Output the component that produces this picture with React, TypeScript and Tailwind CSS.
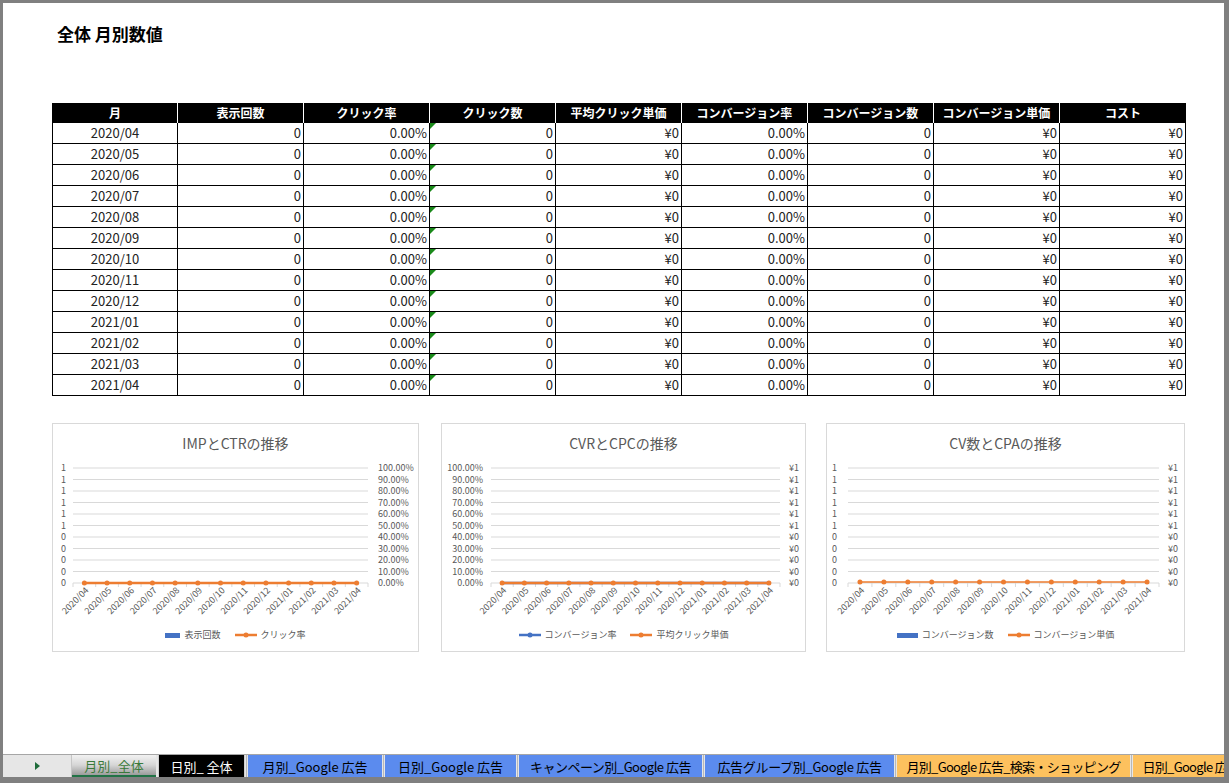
import React from 'react';

const months = [
  '2020/04', '2020/05', '2020/06', '2020/07', '2020/08', '2020/09', '2020/10',
  '2020/11', '2020/12', '2021/01', '2021/02', '2021/03', '2021/04',
];

const columns = [
  { label: '月', w: 'w-[125px]' },
  { label: '表示回数', w: 'w-[126px]' },
  { label: 'クリック率', w: 'w-[126px]' },
  { label: 'クリック数', w: 'w-[126px]' },
  { label: '平均クリック単価', w: 'w-[126px]' },
  { label: 'コンバージョン率', w: 'w-[126px]' },
  { label: 'コンバージョン数', w: 'w-[126px]' },
  { label: 'コンバージョン単価', w: 'w-[126px]' },
  { label: 'コスト', w: 'w-[126px]' },
];

const rowValues = ['0', '0.00%', '0', '¥0', '0.00%', '0', '¥0', '¥0'];

const BLUE = '#4472c4';
const ORANGE = '#ed7d31';

function DataTable() {
  return (
    <div className="mt-[57px] w-[1134px] border-l border-black font-['Noto_Sans_CJK_JP',sans-serif]">
      <div className="flex h-[20px] bg-black">
        {columns.map((c, i) => (
          <div
            key={c.label}
            className={`${c.w} flex items-center justify-center text-[12px] font-bold text-white ${
              i < columns.length - 1 ? 'border-r border-white' : ''
            }`}
          >
            {c.label}
          </div>
        ))}
      </div>
      {months.map((m) => (
        <div key={m} className="flex h-[21px]">
          <div className={`${columns[0].w} flex items-center justify-center border-r border-b border-black text-[13px] text-[#222]`}>
            {m}
          </div>
          {rowValues.map((v, i) => (
            <div
              key={i}
              className={`${columns[i + 1].w} relative flex items-center justify-end pr-[2px] border-r border-b border-black text-[13px] text-[#222]`}
            >
              {i === 2 && (
                <div className="absolute top-0 left-0 w-0 h-0 border-t-[6px] border-r-[6px] border-t-[#1a8a1a] border-r-transparent" />
              )}
              {v}
            </div>
          ))}
        </div>
      ))}
    </div>
  );
}

type LegendItem = { label: string; color: string; kind: 'bar' | 'line'; barW?: number };

type ChartProps = {
  title: string;
  width: string;
  svgW: number;
  plotLeft: number;
  plotRight: number;
  leftEnd: number;
  rightStart: number;
  left: string[];
  right: string[];
  lineW: number;
  lineY: number;
  blueLine?: boolean;
  legend: LegendItem[];
};

function Chart(p: ChartProps) {
  const gridYs = Array.from({ length: 11 }, (_, i) => 12 + i * 11.5);
  const cw = (p.plotRight - p.plotLeft) / 13;
  const centers = months.map((_, i) => p.plotLeft + (i + 0.5) * cw);
  const axisY = gridYs[10];

  return (
    <div className={`${p.width} h-[229px] border border-[#d9d9d9] bg-white flex flex-col font-['Noto_Sans_CJK_JP',sans-serif]`}>
      <div className="h-[32px] pt-[9px] text-center text-[14px] leading-[20px] text-[#595959]">{p.title}</div>
      <svg width={p.svgW} height={170} className="block">
        {gridYs.map((y) => (
          <line key={y} x1={p.plotLeft} x2={p.plotRight} y1={y} y2={y} stroke="#d9d9d9" strokeWidth={1} />
        ))}
        {Array.from({ length: 14 }, (_, i) => p.plotLeft + i * cw).map((x) => (
          <line key={x} x1={x} x2={x} y1={axisY} y2={axisY + 4} stroke="#d9d9d9" strokeWidth={1} />
        ))}
        {p.left.map((t, i) => (
          <text key={'l' + i} x={p.leftEnd} y={gridYs[i] + 3} textAnchor="end" fontSize={9} fill="#595959">
            {t}
          </text>
        ))}
        {p.right.map((t, i) => (
          <text key={'r' + i} x={p.rightStart} y={gridYs[i] + 3} fontSize={9} fill="#595959">
            {t}
          </text>
        ))}
        {centers.map((cx, i) => (
          <text
            key={'x' + i}
            x={cx + 5}
            y={axisY + 8}
            textAnchor="end"
            fontSize={9}
            fill="#595959"
            transform={`rotate(-45 ${cx + 5} ${axisY + 8})`}
          >
            {months[i]}
          </text>
        ))}
        {p.blueLine && (
          <polyline
            points={centers.map((x) => `${x},${p.lineY}`).join(' ')}
            fill="none"
            stroke={BLUE}
            strokeWidth={p.lineW}
          />
        )}
        <polyline
          points={centers.map((x) => `${x},${p.lineY}`).join(' ')}
          fill="none"
          stroke={ORANGE}
          strokeWidth={p.lineW}
        />
        {centers.map((x) => (
          <circle key={'d' + x} cx={x} cy={p.lineY} r={2.5} fill={ORANGE} />
        ))}
      </svg>
      <div className="h-[18px] flex items-center justify-center gap-[14px] text-[9px] text-[#595959]">
        {p.legend.map((l) => (
          <div key={l.label} className="flex items-center gap-[4px]">
            {l.kind === 'bar' ? (
              <span className="block h-[5px]" style={{ width: l.barW ?? 15, background: l.color }} />
            ) : (
              <svg width={22} height={6} className="block">
                <line x1={0} x2={22} y1={3} y2={3} stroke={l.color} strokeWidth={2.5} />
                <circle cx={11} cy={3} r={2.5} fill={l.color} />
              </svg>
            )}
            <span>{l.label}</span>
          </div>
        ))}
      </div>
    </div>
  );
}

const ones = ['1', '1', '1', '1', '1', '1', '0', '0', '0', '0', '0'];
const pct = ['100.00%', '90.00%', '80.00%', '70.00%', '60.00%', '50.00%', '40.00%', '30.00%', '20.00%', '10.00%', '0.00%'];
const yen = ['¥1', '¥1', '¥1', '¥1', '¥1', '¥1', '¥0', '¥0', '¥0', '¥0', '¥0'];

function Charts() {
  return (
    <div className="mt-[27px] flex">
      <Chart
        title="IMPとCTRの推移"
        width="w-[367px]"
        svgW={365}
        plotLeft={20}
        plotRight={315}
        leftEnd={13}
        rightStart={325}
        left={ones}
        right={pct}
        lineW={2.5}
        lineY={127}
        legend={[
          { label: '表示回数', color: BLUE, kind: 'bar', barW: 15 },
          { label: 'クリック率', color: ORANGE, kind: 'line' },
        ]}
      />
      <div className="w-[22px]" />
      <Chart
        title="CVRとCPCの推移"
        width="w-[365px]"
        svgW={363}
        plotLeft={49}
        plotRight={338}
        leftEnd={41}
        rightStart={347}
        left={pct}
        right={yen}
        lineW={2.5}
        lineY={127}
        blueLine
        legend={[
          { label: 'コンバージョン率', color: BLUE, kind: 'line' },
          { label: '平均クリック単価', color: ORANGE, kind: 'line' },
        ]}
      />
      <div className="w-[20px]" />
      <Chart
        title="CV数とCPAの推移"
        width="w-[359px]"
        svgW={357}
        plotLeft={21}
        plotRight={332}
        leftEnd={10}
        rightStart={341}
        left={ones}
        right={yen}
        lineW={1.5}
        lineY={126}
        legend={[
          { label: 'コンバージョン数', color: BLUE, kind: 'bar', barW: 21 },
          { label: 'コンバージョン単価', color: ORANGE, kind: 'line' },
        ]}
      />
    </div>
  );
}

const colorTabs = [
  { label: '月別_Google 広告', w: 'w-[134px]', bg: 'bg-[#5b8bee]', tr: '' },
  { label: '日別_Google 広告', w: 'w-[131px]', bg: 'bg-[#5b8bee]', tr: '' },
  { label: 'キャンペーン別_Google 広告', w: 'w-[183px]', bg: 'bg-[#5b8bee]', tr: 'tracking-[-0.5px]' },
  { label: '広告グループ別_Google 広告', w: 'w-[189px]', bg: 'bg-[#5b8bee]', tr: 'tracking-[-0.3px]' },
  { label: '月別_Google 広告_検索・ショッピング', w: 'w-[233px]', bg: 'bg-[#fdc15e]', tr: 'tracking-[-0.7px]' },
  { label: '日別_Google 広告_検索・ショッピング', w: 'w-[233px]', bg: 'bg-[#fdc15e]', tr: 'tracking-[-0.7px]' },
];

function SheetTabs() {
  return (
    <div className="h-[23px] shrink-0 border-t border-[#a6a6a6] bg-[#e6e6e6] flex overflow-hidden font-['Noto_Sans_CJK_JP',sans-serif] text-[13px] leading-none">
      <div className="w-[69px] shrink-0 flex items-center justify-center border-r border-[#c6c6c6]">
        <svg width={5} height={8} className="block">
          <polygon points="0,0 5,4 0,8" fill="#1e6b3a" />
        </svg>
      </div>
      <div className="w-[84px] shrink-0 flex items-center justify-center bg-gradient-to-b from-[#f2f2f2] via-[#d6d6d6] to-[#9c9c9c] text-[#3a7a3a] border-b-2 border-[#217346]">
        月別_全体
      </div>
      <div className="w-[2px] shrink-0" />
      <div className="w-[87px] shrink-0 flex items-center justify-center bg-black text-white border-x border-[#d0d0d0]">
        日別_ 全体
      </div>
      {colorTabs.map((t) => (
        <div key={t.label} className="flex shrink-0">
          <div className="w-[3px] flex justify-center">
            <div className="w-px h-full bg-[#b8b8b8]" />
          </div>
          <div className={`${t.w} ${t.bg} ${t.tr} flex items-center justify-center text-black whitespace-nowrap overflow-hidden`}>
            {t.label}
          </div>
        </div>
      ))}
    </div>
  );
}

export default function App() {
  return (
    <div className="w-[1229px] h-[783px] bg-[#808080] pt-[3px] pl-[3px] pr-[5px] pb-[6px] flex flex-col overflow-hidden">
      <div className="flex-1 bg-white pl-[49px] overflow-hidden">
        <div className="mt-[19px] pl-[5px] h-[24px] leading-[24px] text-[17px] font-bold text-black font-['Noto_Sans_CJK_JP',sans-serif]">
          全体 月別数値
        </div>
        <DataTable />
        <Charts />
      </div>
      <SheetTabs />
    </div>
  );
}
